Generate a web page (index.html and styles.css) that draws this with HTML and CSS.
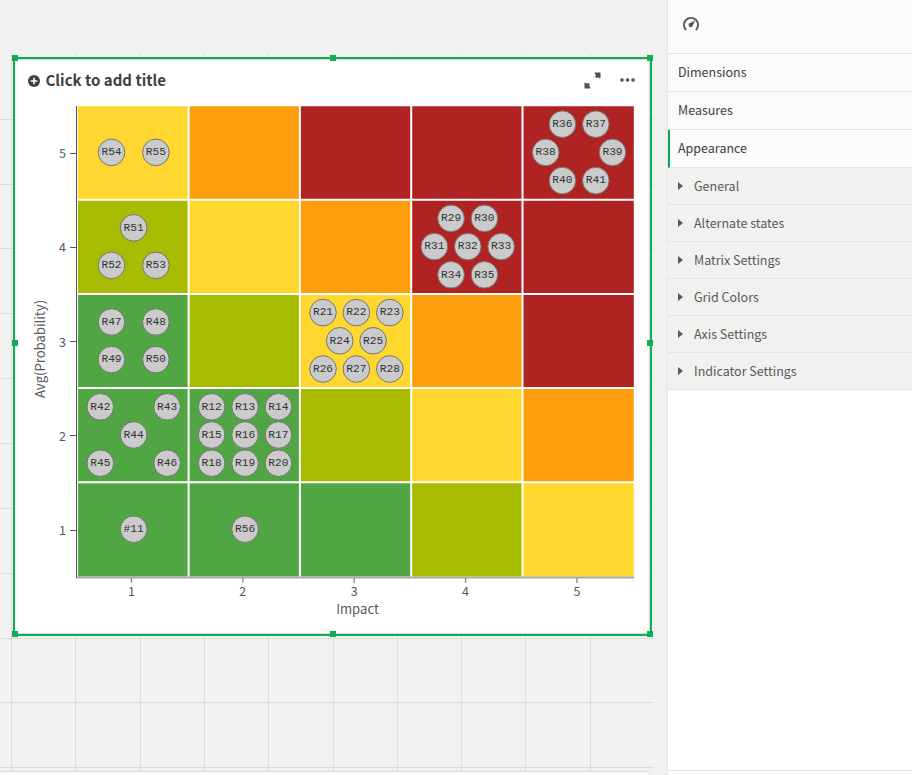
FILE: index.html
```html
<!DOCTYPE html>
<html lang="en">
<head>
<meta charset="utf-8">
<title>Risk matrix</title>
<link rel="stylesheet" href="styles.css">
</head>
<body>
<div class="app">
  <main class="sheet">
    <svg class="guides" width="654" height="717" viewBox="0 0 654 717" aria-hidden="true">
      <path d="M11.5 0V717M75.5 0V717M140.5 0V717M204.5 0V717M268.5 0V717M333.5 0V717M397.5 0V717M461.5 0V717M525.5 0V717M590.5 0V717M0 65.5H654M0 130.5H654M0 194.5H654M0 259.5H654M0 324.5H654M0 389.5H654M0 454.5H654M0 519.5H654M0 584.5H654M0 648.5H654M0 713.5H654"/>
    </svg>
    <section class="object">
      <header class="object-head">
        <svg class="plus" width="12" height="12" viewBox="0 0 12 12"><circle cx="6" cy="6" r="6"/><path d="M6 2.7V9.3M2.7 6H9.3"/></svg>
        <h1>Click to add title</h1>
        <svg class="expand" width="17" height="17" viewBox="0 0 17 17"><path d="M10.8 .5H16.5V6.2H15L14 5L12.6 6.2L11 4.6L12.2 3.2L10.8 2.2ZM6.2 16.5H.5V10.8H2L3 12L4.4 10.8L6 12.4L4.8 13.8L6.2 14.8Z"/></svg>
        <svg class="more" width="15" height="4" viewBox="0 0 15 4"><circle cx="2" cy="2" r="1.8"/><circle cx="7.5" cy="2" r="1.8"/><circle cx="13" cy="2" r="1.8"/></svg>
      </header>
      <svg class="chart" id="chart" width="634" height="532" viewBox="15 101 634 532"></svg>
      <i class="handle tl"></i><i class="handle tc"></i><i class="handle tr"></i>
      <i class="handle ml"></i><i class="handle mr"></i>
      <i class="handle bl"></i><i class="handle bc"></i><i class="handle br"></i>
    </section>
    <div class="next-object"></div>
  </main>
  <aside class="panel">
    <div class="panel-head">
      <svg width="18" height="16" viewBox="0 0 18 16"><path class="arc" d="M4.1 14.1A7.1 7.1 0 1 1 13.9 14.1"/><path class="needle" d="M13.2 4.5L10.9 9.2A2.2 2.2 0 1 1 8.4 6.8Z"/></svg>
    </div>
    <div class="section">Dimensions</div>
    <div class="section">Measures</div>
    <div class="section active">Appearance</div>
    <div class="item"><i class="caret"></i>General</div>
    <div class="item"><i class="caret"></i>Alternate states</div>
    <div class="item"><i class="caret"></i>Matrix Settings</div>
    <div class="item"><i class="caret"></i>Grid Colors</div>
    <div class="item"><i class="caret"></i>Axis Settings</div>
    <div class="item"><i class="caret"></i>Indicator Settings</div>
    <div class="panel-foot"></div>
  </aside>
</div>
<script src="chart.js"></script>
</body>
</html>
```
FILE: styles.css
```css
* { box-sizing: border-box; }
body {
  margin: 0;
  font-family: "Noto Sans CJK SC", "Noto Sans", sans-serif;
  color: #404040;
}
.app { display: flex; width: 912px; height: 775px; overflow: hidden; }
.sheet {
  position: relative;
  flex: 0 0 667px;
  display: flex;
  flex-direction: column;
  padding: 57px 0 0 13px;
  background: #f1f1ef;
  overflow: hidden;
}
.guides { position: absolute; left: 0; top: 54px; }
.guides path { stroke: #dcdcda; stroke-width: 1; fill: none; }
.object {
  position: relative;
  flex: none;
  width: 639px;
  height: 579px;
  border: 2px solid #0caf54;
  background: #fff;
}
.object::after {
  content: "";
  position: absolute;
  inset: 0;
  border: 1px solid #dcdcdc;
  border-left: 0;
}
.object-head {
  display: flex;
  align-items: center;
  height: 42px;
  padding: 0 15.5px 0 13px;
}
.plus { fill: #404040; margin-top: 2px; }
.plus path { stroke: #fff; stroke-width: 1.6; }
h1 {
  flex: 1;
  margin: 0 0 0 5.5px;
  font-size: 15px;
  line-height: 20px;
  font-weight: 700;
}
.expand { fill: #505050; margin-right: 19px; }
.more { fill: #505050; }
.chart { display: block; }
.handle {
  position: absolute;
  z-index: 1;
  width: 6px;
  height: 6px;
  background: #0caf54;
}
.tl, .tc, .tr { top: -4px; }
.bl, .bc, .br { bottom: -3px; }
.ml, .mr { top: 281px; }
.tl, .ml, .bl { left: -3px; }
.tr, .mr, .br { right: -3px; }
.tc, .bc { left: 315px; }
.next-object {
  position: absolute;
  left: -6px;
  top: 771px;
  width: 656px;
  height: 20px;
  border: 1px solid #dcdcda;
  border-radius: 4px;
  background: #fcfcfc;
}
.axis-line { stroke: #595959; stroke-width: 1; fill: none; }
.x-line { stroke: #a9a9a5; stroke-width: 2; }
.tick-x { stroke: #8c8c8c; stroke-width: 1.3; }
.tick-text { font-size: 12.5px; fill: #595959; text-anchor: middle; }
.axis-title { font-size: 13.1px; }
.separator { stroke: #fff; stroke-width: 2; }
.bubble { fill: #cbcbcb; stroke: #737373; stroke-width: 1; }
.bubble-text {
  font-family: "Liberation Mono", monospace;
  font-size: 11.2px;
  fill: #333;
  text-anchor: middle;
}
.panel {
  flex: 1;
  display: flex;
  flex-direction: column;
  border-left: 1px solid #e4e4e4;
  background: #fff;
}
.panel-head {
  height: 54px;
  flex: none;
  padding: 16px 0 0 14px;
  background: #fbfbfb;
  border-bottom: 1px solid #e4e4e4;
}
.panel-head svg { display: block; }
.arc { fill: none; stroke: #595959; stroke-width: 1.9; }
.needle { fill: #595959; }
.section {
  flex: none;
  height: 38px;
  padding-left: 10px;
  border-bottom: 1px solid #e4e4e4;
  background: #fbfbfb;
  font-size: 12.5px;
  line-height: 35px;
}
.active { border-left: 2px solid #0ca751; padding-left: 8px; }
.item {
  flex: none;
  display: flex;
  align-items: center;
  height: 37px;
  padding-left: 10px;
  border-bottom: 1px solid #e4e4e4;
  background: #f1f1ef;
  color: #595959;
  font-size: 12.5px;
  line-height: 36px;
}
.caret {
  width: 0;
  height: 0;
  margin: 0 11px 1px 0;
  border: 4px solid transparent;
  border-left: 5px solid #595959;
  border-right: 0;
}
.panel-foot { margin-top: auto; height: 5px; border-top: 1px solid #e4e4e4; background: #fbfbfb; }
```
FILE: chart.js
```javascript
const ns = 'http://www.w3.org/2000/svg';
const chart = document.getElementById('chart');

function add(tag, attrs, text) {
  const el = document.createElementNS(ns, tag);
  for (const key in attrs) el.setAttribute(key, attrs[key]);
  if (text) el.textContent = text;
  chart.appendChild(el);
}

const colors = { g: '#4fa642', l: '#a7bc00', y: '#ffd72f', o: '#ff9e0c', r: '#b02323' };
const rows = ['yorrr', 'lyorr', 'glyor', 'gglyo', 'gggly'];
const left = 77.3, top0 = 105.5, w = 111.3, h = 94.2;

rows.forEach((row, r) => [...row].forEach((c, i) =>
  add('rect', { x: left + i * w, y: top0 + r * h, width: w, height: h, fill: colors[c] })));
for (let i = 1; i < 5; i++) {
  add('path', { class: 'separator', d: `M${left + i * w} 105V577` });
  add('path', { class: 'separator', d: `M77 ${top0 + i * h}H634` });
}
add('path', { class: 'separator', d: 'M77 106V577M77 105.2H634' });

add('path', { class: 'x-line', d: 'M76 577.5H634' });
add('path', { class: 'axis-line', d: 'M76.5 106V578' });

for (let i = 0; i < 5; i++) {
  const x = 131.5 + i * 111.35;
  const y = 153 + i * 94.3;
  add('path', { class: 'tick-x', d: `M${x} 578V583` });
  add('path', { class: 'axis-line', d: `M70 ${Math.floor(y) + 0.5}H76` });
  add('text', { class: 'tick-text', x, y: 596 }, String(i + 1));
  add('text', { class: 'tick-text', x: 62.5, y: y + 5 }, String(5 - i));
}
add('text', { class: 'tick-text axis-title', x: 357.5, y: 614.4 }, 'Impact');
add('text', { class: 'tick-text axis-title', transform: 'translate(45 349) rotate(-90)' }, 'Avg(Probability)');

// column, row, then label / dx / dy from the cell centre
const groups = [
  [0, 0, ['R54', -22.2, 0], ['R55', 22.2, 0]],
  [4, 0, ['R36', -16.7, -28.2], ['R37', 16.7, -28.2], ['R38', -33.4, 0], ['R39', 33.4, 0], ['R40', -16.7, 28.2], ['R41', 16.7, 28.2]],
  [0, 1, ['R51', 0, -18.8], ['R52', -22.2, 18.8], ['R53', 22.2, 18.8]],
  [3, 1, ['R29', -16.7, -28.2], ['R30', 16.7, -28.2], ['R31', -33.4, 0], ['R32', 0, 0], ['R33', 33.4, 0], ['R34', -16.7, 28.2], ['R35', 16.7, 28.2]],
  [0, 2, ['R47', -22.2, -18.8], ['R48', 22.2, -18.8], ['R49', -22.2, 18.8], ['R50', 22.2, 18.8]],
  [2, 2, ['R21', -33.4, -28.2], ['R22', 0, -28.2], ['R23', 33.4, -28.2], ['R24', -16.7, 0], ['R25', 16.7, 0], ['R26', -33.4, 28.2], ['R27', 0, 28.2], ['R28', 33.4, 28.2]],
  [0, 3, ['R42', -33.4, -28.2], ['R43', 33.4, -28.2], ['R44', 0, 0], ['R45', -33.4, 28.2], ['R46', 33.4, 28.2]],
  [1, 3, ['R12', -33.4, -28.2], ['R13', 0, -28.2], ['R14', 33.4, -28.2], ['R15', -33.4, 0], ['R16', 0, 0], ['R17', 33.4, 0], ['R18', -33.4, 28.2], ['R19', 0, 28.2], ['R20', 33.4, 28.2]],
  [0, 4, ['#11', 0, 0]],
  [1, 4, ['R56', 0, 0]]
];
groups.forEach(([col, row, ...items]) => items.forEach(([label, dx, dy]) => {
  const x = 133.7 + col * 111.35 + dx;
  const y = 152.4 + row * 94.2 + dy;
  add('circle', { class: 'bubble', cx: x, cy: y, r: 13.3 });
  add('text', { class: 'bubble-text', x, y: y + 2.8 }, label);
}));
```
